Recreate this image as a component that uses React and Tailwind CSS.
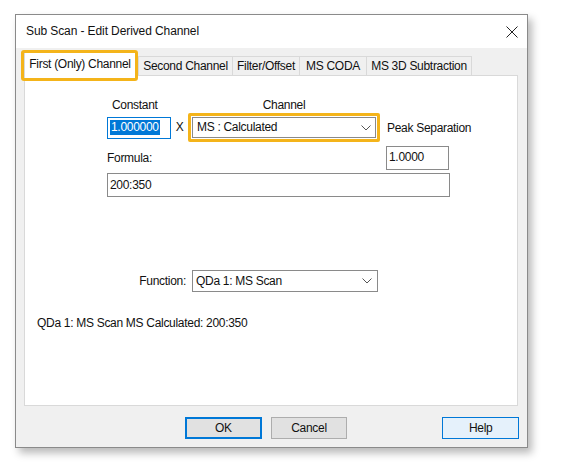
import React from 'react';

const Chevron = () => (
    <svg width="10" height="6" viewBox="0 0 10 6" className="shrink-0">
        <polyline points="0.5,0.5 5,5 9.5,0.5" fill="none" stroke="#555" strokeWidth="1" />
    </svg>
);

const Tab = ({ label, w }) => (
    <div className={`h-[19px] border border-b-0 border-[#d9d9d9] bg-[#f0f0f0] flex items-center justify-center -ml-px ${w}`}>
        {label}
    </div>
);

const Button = ({ label, cls }) => (
    <div className={`w-[77px] h-[22px] flex items-center justify-center ${cls}`}>{label}</div>
);

export default function App() {
    return (
        <div
            className="w-[561px] h-[469px] bg-white pt-[14px] pl-[15px] text-[12px] leading-[15px] tracking-[-0.3px] text-[#111]"
            style={{ fontFamily: '"Liberation Sans", Arial, sans-serif' }}
        >
            <div className="w-[513px] border border-[#8a8a8a] bg-[#f0f0f0] flex flex-col shadow-[4px_5px_8px_rgba(0,0,0,0.28)]">
                {/* title bar */}
                <div className="h-[33px] bg-white flex items-center justify-between pl-[10px] pr-[9px]">
                    <span className="text-[12px] tracking-[-0.1px]">Sub Scan - Edit Derived Channel</span>
                    <svg width="12" height="12" viewBox="0 0 12 12">
                        <path d="M0.5 0.5 L11.5 11.5 M11.5 0.5 L0.5 11.5" stroke="#222" strokeWidth="1" />
                    </svg>
                </div>

                <div className="px-[8px] pb-[8px]">
                    {/* tabs */}
                    <div className="h-[27px] flex items-end relative z-10">
                        <div className="relative w-[112px] h-[24px] -mb-px bg-white border border-b-0 border-[#d9d9d9] flex items-center justify-center">
                            First (Only) Channel
                            <div className="absolute -left-[4px] -right-[3px] -top-[3px] -bottom-[5px] border-[3px] border-[#f4b41a] rounded-[3px]" />
                        </div>
                        <div className="w-[3px]" />
                        <Tab label="Second Channel" w="w-[95px]" />
                        <Tab label="Filter/Offset" w="w-[68px]" />
                        <Tab label="MS CODA" w="w-[68px]" />
                        <Tab label="MS 3D Subtraction" w="w-[106px]" />
                    </div>

                    {/* panel */}
                    <div className="w-[494px] h-[331px] bg-white border border-[#d9d9d9]">
                        <div className="ml-[82px] pt-[22px] w-[370px]">
                            <div className="flex h-[15px]">
                                <span className="w-[81px] pl-[5px]">Constant</span>
                                <span className="w-[192px] text-center">Channel</span>
                            </div>
                            <div className="flex items-center h-[29px]">
                                <div className="w-[64px] h-[22px] border border-[#0078d7] flex items-center pl-[2px]">
                                    <span className="bg-[#0078d7] text-white px-px">1.000000</span>
                                </div>
                                <span className="w-[17px] text-center">X</span>
                                <div className="w-[192px] h-[29px] border-[3px] border-[#f4b41a] rounded-[2px] p-px">
                                    <div className="h-full border border-[#8a8a8a] flex items-center justify-between pl-[4px] pr-[4px]">
                                        <span>MS : Calculated</span>
                                        <Chevron />
                                    </div>
                                </div>
                                <span className="ml-[7px] mt-[2px]">Peak Separation</span>
                            </div>
                            <div className="flex items-center justify-between w-[343px] mt-[4px]">
                                <span>Formula:</span>
                                <div className="w-[63px] h-[24px] mr-px border border-[#8a8a8a] pl-[2px] pt-[3px]">1.0000</div>
                            </div>
                            <div className="w-[343px] h-[24px] mt-[3px] border border-[#8a8a8a] flex items-center pl-[2px]">200:350</div>
                        </div>

                        <div className="flex items-center mt-[73px]">
                            <span className="w-[161px] text-right">Function:</span>
                            <div className="ml-[6px] w-[186px] h-[22px] border border-[#8a8a8a] flex items-center justify-between pl-[3px] pr-[5px]">
                                <span>QDa 1: MS Scan</span>
                                <Chevron />
                            </div>
                        </div>

                        <div className="mt-[24px] pl-[12px]">QDa 1: MS Scan MS Calculated: 200:350</div>
                    </div>

                    {/* buttons */}
                    <div className="flex mt-[11px]">
                        <Button label="OK" cls="ml-[161px] border-2 border-[#0078d7] bg-[#e1e1e1]" />
                        <Button label="Cancel" cls="ml-[9px] border border-[#adadad] bg-[#e1e1e1]" />
                        <Button label="Help" cls="ml-[95px] border border-[#0078d7] bg-[#e5f1fb]" />
                    </div>
                </div>
            </div>
        </div>
    );
}
